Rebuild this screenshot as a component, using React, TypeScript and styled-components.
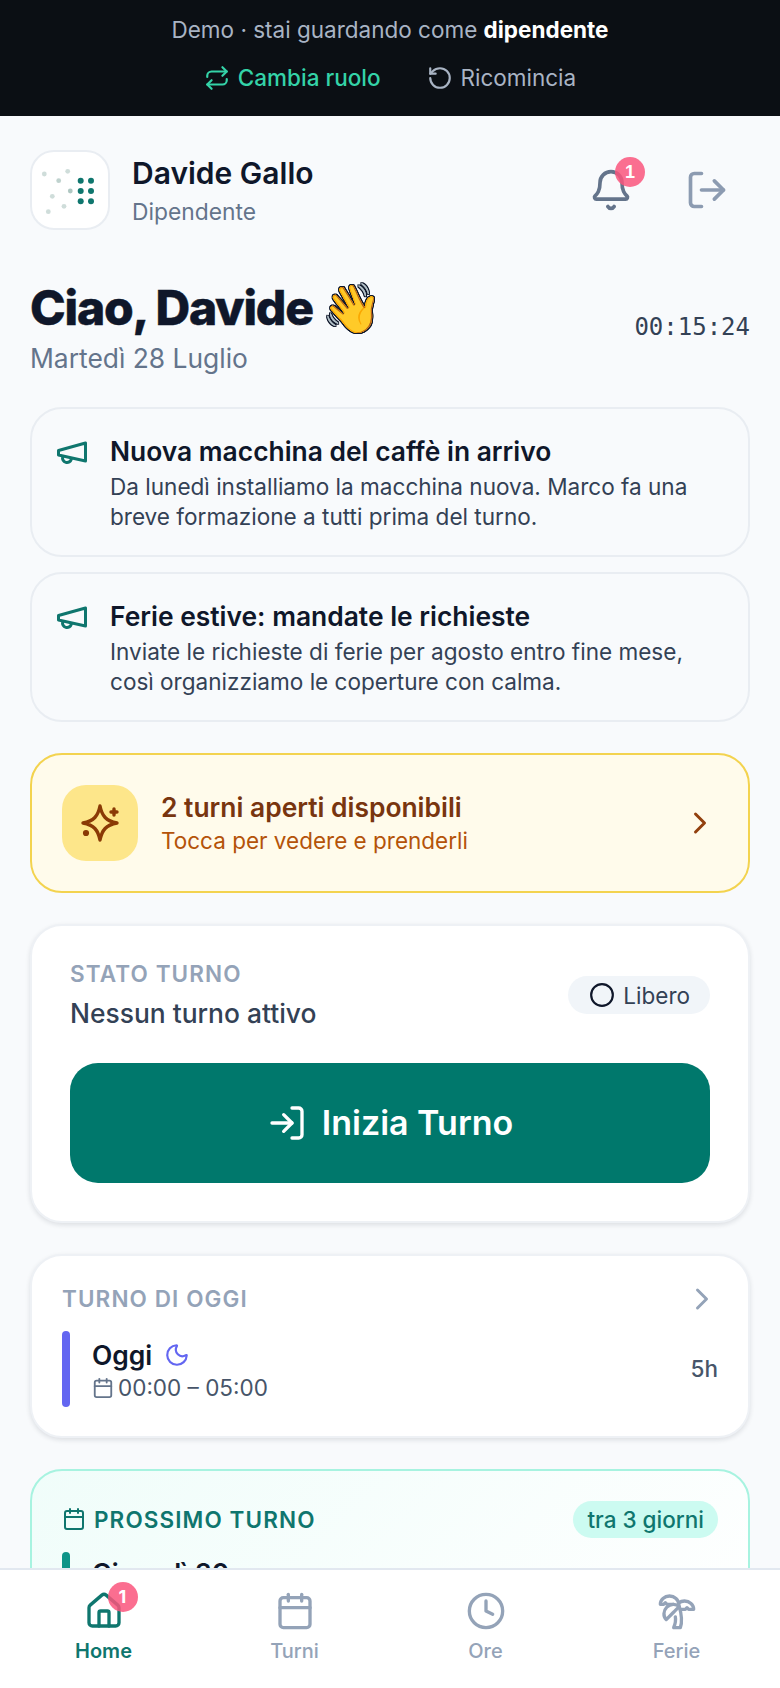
import React from 'react'
import styled, { createGlobalStyle } from 'styled-components'
import {
  Bell,
  Calendar,
  ChevronRight,
  Circle,
  Clock,
  House,
  LogIn,
  LogOut,
  Moon,
  Repeat,
  RotateCcw,
  TreePalm,
} from 'lucide-react'

const GlobalStyle = createGlobalStyle`
  html, body {
    margin: 0;
    padding: 0;
    background: #f8fafc;
  }
  * {
    box-sizing: border-box;
  }
  body {
    font-family: Inter, "Noto Sans", sans-serif;
    color: #0f172a;
  }
`

const Shell = styled.div`
  width: 780px;
  height: 1688px;
  display: flex;
  flex-direction: column;
  overflow: hidden;
`

const DemoBar = styled.div`
  height: 116px;
  flex: none;
  background: #0b0f14;
  display: flex;
  flex-direction: column;
  align-items: center;
  padding-top: 14px;
  gap: 16px;
  font-size: 22.5px;
  color: #a9b4c4;
`

const DemoText = styled.div`
  line-height: 32px;
  b {
    color: #fff;
    font-weight: 700;
  }
`

const DemoActions = styled.div`
  display: flex;
  gap: 46px;
`

const DemoAction = styled.span<{ $accent?: boolean }>`
  display: flex;
  align-items: center;
  gap: 8px;
  line-height: 32px;
  font-weight: ${({ $accent }) => ($accent ? 500 : 400)};
  color: ${({ $accent }) => ($accent ? '#34d3a8' : '#a9b4c4')};
`

const Scroll = styled.main`
  flex: 1;
  min-height: 0;
  overflow: hidden;
  padding: 34px 30px 0;
`

const Header = styled.header`
  display: flex;
  align-items: center;
  gap: 22px;
  padding-right: 11px;
`

const LogoBox = styled.div`
  width: 80px;
  height: 80px;
  flex: none;
  border-radius: 24px;
  background: #fff;
  border: 2px solid #e9edf2;
  display: flex;
`

const Who = styled.div`
  flex: 1;
  padding-top: 4px;
`

const Name = styled.div`
  font-size: 30px;
  line-height: 38px;
  font-weight: 600;
`

const Role = styled.div`
  margin-top: 2px;
  font-size: 22.8px;
  line-height: 36px;
  color: #64748b;
`

const HeadIcon = styled.button`
  position: relative;
  width: 64px;
  height: 64px;
  border: 0;
  background: none;
  padding: 0;
  margin-left: 10px;
  display: flex;
  align-items: center;
  justify-content: center;
  color: #64748b;
`

const Badge = styled.span<{ $top: number; $right: number }>`
  position: absolute;
  top: ${({ $top }) => $top}px;
  right: ${({ $right }) => $right}px;
  width: 30px;
  height: 30px;
  border-radius: 50%;
  background: rgba(250, 85, 125, 0.85);
  color: #fff;
  font-size: 18px;
  font-weight: 700;
  display: flex;
  align-items: center;
  justify-content: center;
`

const Greeting = styled.section`
  margin-top: 48px;
  display: flex;
  justify-content: space-between;
  align-items: flex-end;
`

const Hello = styled.h1`
  margin: 0;
  font-size: 48px;
  line-height: 60px;
  font-weight: 800;
  letter-spacing: -1.2px;
  -webkit-text-stroke: 0.5px #0f172a;
`

const Wave = styled.span`
  text-shadow:
    1px 0 #0f172a,
    -1px 0 #0f172a,
    0 1px #0f172a,
    0 -1px #0f172a,
    1px 1px #0f172a,
    -1px -1px #0f172a,
    1px -1px #0f172a,
    -1px 1px #0f172a;
`

const DateLine = styled.div`
  margin-top: 2px;
  font-size: 26.4px;
  line-height: 36px;
  color: #64748b;
`

const ClockText = styled.div`
  font-family: "DejaVu Sans Mono", monospace;
  font-size: 24px;
  line-height: 36px;
  color: #334155;
  margin-bottom: 31px;
`

const Notices = styled.section`
  margin-top: 31px;
  display: flex;
  flex-direction: column;
  gap: 15.5px;
`

const Notice = styled.article`
  height: 149.5px;
  border: 2px solid #e9edf2;
  border-radius: 32px;
  padding: 25px 24px 0 22px;
  display: flex;
  gap: 20px;
`

const NoticeIcon = styled.div`
  flex: none;
  width: 36px;
  display: flex;
  color: #0f766e;
  height: 36px;
`

const NoticeTitle = styled.div`
  font-size: 26.4px;
  line-height: 34px;
  font-weight: 600;
`

const NoticeText = styled.div`
  margin-top: 4px;
  font-size: 22.55px;
  line-height: 30px;
  color: #334155;
`

const Offer = styled.section`
  margin-top: 31px;
  height: 140px;
  background: #fffbeb;
  border: 2px solid #f3d34f;
  border-radius: 32px;
  padding: 0 30px;
  display: flex;
  align-items: center;
  gap: 23px;
`

const OfferIcon = styled.div`
  width: 76px;
  height: 76px;
  flex: none;
  border-radius: 24px;
  background: #fde68a;
  color: #8a3a05;
  display: flex;
  align-items: center;
  justify-content: center;
`

const OfferBody = styled.div`
  flex: 1;
`

const OfferTitle = styled.div`
  font-size: 26.4px;
  line-height: 34px;
  font-weight: 600;
  color: #78350f;
`

const OfferText = styled.div`
  margin-top: 2px;
  font-size: 22.5px;
  line-height: 30px;
  color: #b45309;
`

const Card = styled.section`
  background: #fff;
  border: 2px solid #eef1f5;
  border-radius: 32px;
  box-shadow: 0 2px 5px rgba(15, 23, 42, 0.12);
`

const StatusCard = styled(Card)`
  margin-top: 31px;
  height: 299px;
  padding: 33px 38px;
`

const StatusTop = styled.div`
  display: flex;
  justify-content: space-between;
  align-items: center;
`

const Eyebrow = styled.div`
  font-size: 22.5px;
  line-height: 30px;
  font-weight: 600;
  letter-spacing: 1.1px;
  color: #94a3b8;
`

const StatusText = styled.div`
  margin-top: 5px;
  font-size: 26.4px;
  line-height: 38px;
  font-weight: 500;
  color: #334155;
`

const Pill = styled.div`
  height: 38px;
  padding: 0 20px 0 21px;
  border-radius: 19px;
  background: #f1f5f9;
  display: flex;
  align-items: center;
  gap: 8px;
  font-size: 22.5px;
  color: #334155;
`

const StartButton = styled.button`
  margin-top: 31px;
  width: 100%;
  height: 120px;
  border: 0;
  border-radius: 28px;
  background: #00786c;
  color: #fff;
  font-family: inherit;
  font-size: 34px;
  font-weight: 600;
  display: flex;
  align-items: center;
  justify-content: center;
  gap: 15px;
`

const TodayCard = styled(Card)`
  margin-top: 31px;
  height: 184px;
  padding: 25px 30px;
`

const RowBetween = styled.div`
  display: flex;
  justify-content: space-between;
  align-items: center;
`

const TodayChevron = styled(ChevronRight)`
  margin-right: -2px;
`

const ShiftRow = styled.div<{ $top?: boolean }>`
  margin-top: 14px;
  display: flex;
  align-items: ${({ $top }) => ($top ? 'flex-start' : 'center')};
  gap: 22px;
`

const ShiftBar = styled.div<{ $color: string }>`
  width: 8px;
  height: 76px;
  flex: none;
  border-radius: 4px;
  background: ${({ $color }) => $color};
`

const ShiftBody = styled.div`
  flex: 1;
  padding-top: 4px;
`

const ShiftName = styled.div`
  display: flex;
  align-items: center;
  gap: 12px;
  font-size: 26.4px;
  line-height: 34px;
  font-weight: 600;
`

const ShiftTime = styled.div`
  display: flex;
  align-items: center;
  gap: 4px;
  font-size: 22.5px;
  line-height: 32px;
  color: #475569;
`

const ShiftHours = styled.div`
  font-size: 22.5px;
  font-weight: 500;
  color: #475569;
`

const NextCard = styled(Card)`
  margin-top: 31px;
  height: 200px;
  padding: 30px 30px;
  background: linear-gradient(135deg, #f0fdfa, #fff);
  border-color: #a7f3e0;
  box-shadow: none;
`

const NextLabel = styled.div`
  display: flex;
  align-items: center;
  gap: 8px;
  font-size: 22.5px;
  font-weight: 600;
  letter-spacing: 1.1px;
  color: #0f766e;
`

const NextPill = styled.div`
  height: 37px;
  padding: 0 14px;
  border-radius: 19px;
  background: #ccfbf1;
  font-size: 22.5px;
  line-height: 37px;
  font-weight: 500;
  color: #0f766e;
`

const Nav = styled.nav`
  height: 120px;
  flex: none;
  background: #fff;
  border-top: 2px solid #e2e8f0;
  padding: 0 8px;
  display: grid;
  grid-template-columns: repeat(4, 1fr);
`

const NavItem = styled.a<{ $active?: boolean }>`
  display: flex;
  flex-direction: column;
  align-items: center;
  padding-top: 21px;
  gap: 6px;
  font-size: 20px;
  line-height: 28px;
  font-weight: ${({ $active }) => ($active ? 600 : 500)};
  color: ${({ $active }) => ($active ? '#0f766e' : '#94a3b8')};
`

const NavIcon = styled.div`
  position: relative;
  display: flex;
`

const Megaphone: React.FC = () => (
  <svg width="36" height="36" viewBox="0 0 24 24" fill="none" stroke="currentColor" strokeWidth="2" strokeLinecap="round" strokeLinejoin="round">
    <path d="m3 11 18-5v12L3 14v-3z" />
    <path d="M11.6 16.8a3 3 0 1 1-5.8-1.6" />
  </svg>
)

const Sparkle: React.FC = () => (
  <svg width="44" height="44" viewBox="-22 -22 44 44" fill="none" stroke="currentColor" strokeWidth="3.4" strokeLinecap="round" strokeLinejoin="round">
    <path d="M0 -17 C2 -7 6 -2 17 0 C6 2 2 7 0 17 C-2 7 -6 2 -17 0 C-6 -2 -2 -7 0 -17Z" />
    <path d="M14 -14v6M11 -11h6" />
    <circle cx="-14" cy="10" r="1.4" fill="currentColor" />
  </svg>
)

const LOGO_DOTS = [
  [44.3, 174, 0.3],
  [67.7, 171.3, 0.3],
  [58.7, 180.7, 0.4],
  [70.3, 191, 0.5],
  [52.3, 196.3, 0.3],
  [64, 206.3, 0.3],
  [48.3, 211.7, 0.3],
  [80.7, 180.7, 1],
  [91, 180.7, 1],
  [80.7, 191, 1],
  [91, 191, 1],
  [80.7, 201.3, 1],
  [91, 201.3, 1],
]

const Logo: React.FC = () => (
  <svg width="76" height="76" viewBox="32 152 76 76">
    {LOGO_DOTS.map(([x, y, o]) => (
      <circle key={`${x}-${y}`} cx={x} cy={y} r={o === 1 ? 3 : 2.4} fill={o === 1 ? '#0f766e' : '#5f8f85'} opacity={o} />
    ))}
  </svg>
)

const App: React.FC = () => (
  <Shell>
    <GlobalStyle />
    <DemoBar>
      <DemoText>
        Demo · stai guardando come <b>dipendente</b>
      </DemoText>
      <DemoActions>
        <DemoAction $accent>
          <Repeat size={26} />
          Cambia ruolo
        </DemoAction>
        <DemoAction>
          <RotateCcw size={26} />
          Ricomincia
        </DemoAction>
      </DemoActions>
    </DemoBar>
    <Scroll>
      <Header>
        <LogoBox>
          <Logo />
        </LogoBox>
        <Who>
          <Name>Davide Gallo</Name>
          <Role>Dipendente</Role>
        </Who>
        <HeadIcon>
          <Bell size={44} />
          <Badge $top={-1} $right={-2}>1</Badge>
        </HeadIcon>
        <HeadIcon>
          <LogOut size={44} color="#8c9bb1" />
        </HeadIcon>
      </Header>

      <Greeting>
        <div>
          <Hello>
            Ciao, Davide <Wave>👋</Wave>
          </Hello>
          <DateLine>Martedì 28 Luglio</DateLine>
        </div>
        <ClockText>00:15:24</ClockText>
      </Greeting>

      <Notices>
        <Notice>
          <NoticeIcon>
            <Megaphone />
          </NoticeIcon>
          <div>
            <NoticeTitle>Nuova macchina del caffè in arrivo</NoticeTitle>
            <NoticeText>
              Da lunedì installiamo la macchina nuova. Marco fa una breve formazione a tutti prima del turno.
            </NoticeText>
          </div>
        </Notice>
        <Notice>
          <NoticeIcon>
            <Megaphone />
          </NoticeIcon>
          <div>
            <NoticeTitle>Ferie estive: mandate le richieste</NoticeTitle>
            <NoticeText>
              Inviate le richieste di ferie per agosto entro fine mese, così organizziamo le coperture con calma.
            </NoticeText>
          </div>
        </Notice>
      </Notices>

      <Offer>
        <OfferIcon>
          <Sparkle />
        </OfferIcon>
        <OfferBody>
          <OfferTitle>2 turni aperti disponibili</OfferTitle>
          <OfferText>Tocca per vedere e prenderli</OfferText>
        </OfferBody>
        <ChevronRight size={36} color="#92400e" />
      </Offer>

      <StatusCard>
        <StatusTop>
          <div>
            <Eyebrow>STATO TURNO</Eyebrow>
            <StatusText>Nessun turno attivo</StatusText>
          </div>
          <Pill>
            <Circle size={26} color="#0f172a" />
            Libero
          </Pill>
        </StatusTop>
        <StartButton>
          <LogIn size={40} />
          Inizia Turno
        </StartButton>
      </StatusCard>

      <TodayCard>
        <RowBetween>
          <Eyebrow>TURNO DI OGGI</Eyebrow>
          <TodayChevron size={36} color="#94a3b8" />
        </RowBetween>
        <ShiftRow>
          <ShiftBar $color="#6366f1" />
          <ShiftBody>
            <ShiftName>
              Oggi
              <Moon size={26} color="#6366f1" />
            </ShiftName>
            <ShiftTime>
              <Calendar size={22} color="#64748b" />
              00:00 – 05:00
            </ShiftTime>
          </ShiftBody>
          <ShiftHours>5h</ShiftHours>
        </ShiftRow>
      </TodayCard>

      <NextCard>
        <RowBetween>
          <NextLabel>
            <Calendar size={24} />
            PROSSIMO TURNO
          </NextLabel>
          <NextPill>tra 3 giorni</NextPill>
        </RowBetween>
        <ShiftRow $top>
          <ShiftBar $color="#0d9488" />
          <ShiftBody>
            <ShiftName>Giovedì 30</ShiftName>
          </ShiftBody>
        </ShiftRow>
      </NextCard>
    </Scroll>
    <Nav>
      <NavItem $active>
        <NavIcon>
          <House size={40} />
          <Badge $top={-9} $right={-14}>1</Badge>
        </NavIcon>
        Home
      </NavItem>
      <NavItem>
        <NavIcon>
          <Calendar size={40} />
        </NavIcon>
        Turni
      </NavItem>
      <NavItem>
        <NavIcon>
          <Clock size={40} />
        </NavIcon>
        Ore
      </NavItem>
      <NavItem>
        <NavIcon>
          <TreePalm size={40} />
        </NavIcon>
        Ferie
      </NavItem>
    </Nav>
  </Shell>
)

export default App
